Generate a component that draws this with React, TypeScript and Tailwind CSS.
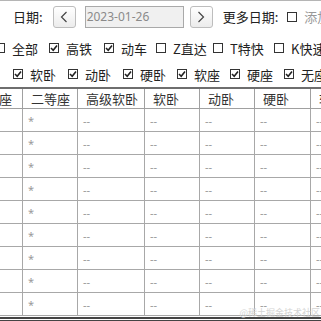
import React from 'react';

const FONT = '"Noto Sans CJK SC", "Noto Sans", sans-serif';

const CheckBox: React.FC<{ checked?: boolean }> = ({ checked }) => (
  <span className="inline-flex h-[10px] w-[10px] shrink-0 items-center justify-center border border-[#333] bg-white">
    {checked && (
      <svg width="8" height="8" viewBox="0 0 8 8">
        <polyline points="1,4 3.2,6.2 7,1.5" fill="none" stroke="#222" strokeWidth="1.6" />
      </svg>
    )}
  </span>
);

const Option: React.FC<{ label: string; checked?: boolean; w: string }> = ({ label, checked, w }) => (
  <div className={`flex shrink-0 items-center ${w}`}>
    <CheckBox checked={checked} />
    <span className="ml-[7px] whitespace-nowrap text-[13px] leading-none text-[#222]">{label}</span>
  </div>
);

const NavButton: React.FC<{ dir: 'prev' | 'next' }> = ({ dir }) => (
  <button className="flex h-[22px] w-[23px] items-center justify-center rounded-[3px] border border-[#bdbdbd] bg-gradient-to-b from-white to-[#ececec]">
    <svg width="8" height="12" viewBox="0 0 8 12">
      <polyline
        points={dir === 'prev' ? '6.5,1 1.5,6 6.5,11' : '1.5,1 6.5,6 1.5,11'}
        fill="none"
        stroke="#444"
        strokeWidth="1.2"
      />
    </svg>
  </button>
);

const columns = ['一等座', '二等座', '高级软卧', '软卧', '动卧', '硬卧', '软座'];
const rows = Array.from({ length: 9 });

export default function App() {
  return (
    <div
      className="relative h-[321px] w-[321px] overflow-hidden border-t border-[#b5b5b5] bg-white"
      style={{ fontFamily: FONT }}
    >
      {/* date bar */}
      <div className="mt-[5px] flex h-[22px] items-center whitespace-nowrap">
        <span className="ml-[13px] text-[13px] text-[#222]">日期:</span>
        <div className="ml-[10px]">
          <NavButton dir="prev" />
        </div>
        <div className="ml-[9px] flex h-[22px] w-[99px] shrink-0 items-center border border-[#a9a9a9] bg-[#f0f0f0] pl-[1px] text-[12px] text-[#8a8a8a]" style={{ fontFamily: '"Noto Sans", sans-serif' }}>
          2023-01-26
        </div>
        <div className="ml-[6px]">
          <NavButton dir="next" />
        </div>
        <span className="ml-[10px] text-[13px] text-[#222]">更多日期:</span>
        <div className="ml-[9px] flex items-center">
          <CheckBox />
          <span className="ml-[7px] text-[13px] text-[#999]">添加日期</span>
        </div>
      </div>

      {/* train types */}
      <div className="mt-[10px] ml-[-5px] flex h-[20px] items-center">
        <Option label="全部" w="w-[54px]" />
        <Option label="高铁" checked w="w-[55px]" />
        <Option label="动车" checked w="w-[52px]" />
        <Option label="Z直达" w="w-[57px]" />
        <Option label="T特快" w="w-[61px]" />
        <Option label="K快速" w="w-[60px]" />
      </div>

      {/* seat types */}
      <div className="mt-[6px] ml-[13px] flex h-[20px] items-center">
        <Option label="软卧" checked w="w-[55px]" />
        <Option label="动卧" checked w="w-[55px]" />
        <Option label="硬卧" checked w="w-[54px]" />
        <Option label="软座" checked w="w-[53px]" />
        <Option label="硬座" checked w="w-[54px]" />
        <Option label="无座" checked w="w-[54px]" />
      </div>

      {/* table */}
      <div className="mt-[3px] ml-[-32px] w-[420px] border-t-2 border-[#6e6e6e]">
        <div className="grid grid-cols-[55px_55px_67px_55px_55px_56px_77px]">
          {columns.map((c, i) => (
            <div
              key={c}
              className={`flex h-[20px] items-center border-r border-b border-[#a0a0a0] text-[13px] leading-none whitespace-nowrap text-[#333] ${i === 0 ? 'pl-[5px]' : 'pl-[8px]'}`}
            >
              {c}
            </div>
          ))}
          {rows.map((_, r) =>
            columns.map((c, i) => (
              <div
                key={`${r}-${c}`}
                className="flex h-[23px] items-center border-r border-b border-[#a8a8a8] pl-[5px] text-[11px] leading-none text-[#9a9a9a]"
                style={{ fontFamily: '"Noto Sans", sans-serif' }}
              >
                {i === 1 ? '*' : i === 0 ? '' : '--'}
              </div>
            ))
          )}
        </div>
        <div className="mt-[1px] h-[5px] border-y-2 border-[#444]" />
      </div>

      <span className="absolute right-[1px] bottom-[4px] text-[9px] leading-none text-[#d4d4d4]">@稀土掘金技术社区</span>
    </div>
  );
}
